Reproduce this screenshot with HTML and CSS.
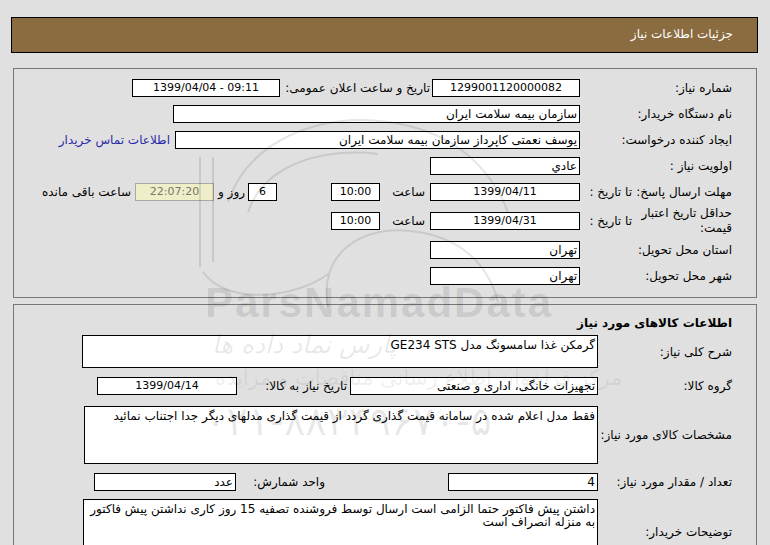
FILE: index.html
```html
<!DOCTYPE html>
<html lang="fa" dir="rtl">
<head>
<meta charset="utf-8">
<title>جزئیات اطلاعات نیاز</title>
<link rel="stylesheet" href="styles.css">
</head>
<body>
<div class="page">
  <div class="header">جزئیات اطلاعات نیاز</div>

  <div class="panel p1">
    <div class="row">
      <div class="lbl">شماره نیاز:</div>
      <div class="box w148 num">1299001120000082</div>
      <div class="lbl-pub">تاریخ و ساعت اعلان عمومی:</div>
      <div class="box w148 num">1399/04/04 - 09:11</div>
    </div>
    <div class="row">
      <div class="lbl">نام دستگاه خریدار:</div>
      <div class="box w407">سازمان بیمه سلامت ایران</div>
    </div>
    <div class="row">
      <div class="lbl">ایجاد کننده درخواست:</div>
      <div class="box w405">یوسف نعمتی کاپرداز سازمان بیمه سلامت ایران</div>
      <a class="contact">اطلاعات تماس خریدار</a>
    </div>
    <div class="row">
      <div class="lbl">اولویت نیاز :</div>
      <div class="box w150">عادي</div>
    </div>
    <div class="row">
      <div class="lbl-a one">مهلت ارسال پاسخ:</div>
      <div class="lbl-b">تا تاریخ :</div>
      <div class="box w150 num">1399/04/11</div>
      <div class="lbl-h">ساعت</div>
      <div class="box w49 num">10:00</div>
      <div class="box w29 num days">6</div>
      <div class="txt-day">روز و</div>
      <div class="box remain num">22:07:20</div>
      <div class="txt-rem">ساعت باقی مانده</div>
    </div>
    <div class="row tall">
      <div class="lbl-a two">حداقل تاریخ اعتبار قیمت:</div>
      <div class="lbl-b">تا تاریخ :</div>
      <div class="box w150 num">1399/04/31</div>
      <div class="lbl-h">ساعت</div>
      <div class="box w49 num">10:00</div>
    </div>
    <div class="row r7">
      <div class="lbl">استان محل تحویل:</div>
      <div class="box w150">تهران</div>
    </div>
    <div class="row">
      <div class="lbl">شهر محل تحویل:</div>
      <div class="box w150">تهران</div>
    </div>
  </div>

  <div class="panel p2">
    <div class="title">اطلاعات کالاهای مورد نیاز</div>
    <div class="row2 g-desc">
      <div class="lbl2">شرح کلی نیاز:</div>
      <div class="box multi w516 h33">گرمکن غذا سامسونگ مدل GE234 STS</div>
    </div>
    <div class="row2 g-group">
      <div class="lbl2">گروه کالا:</div>
      <div class="box w248">تجهیزات خانگی، اداری و صنعتی</div>
      <div class="lbl-need">تاریخ نیاز به کالا:</div>
      <div class="box w140 num">1399/04/14</div>
    </div>
    <div class="row2 g-spec">
      <div class="lbl2">مشخصات کالای مورد نیاز:</div>
      <div class="box multi w514 h58">فقط مدل اعلام شده در سامانه قیمت گذاری گردد از قیمت گذاری مدلهای دیگر جدا اجتناب نمائید</div>
    </div>
    <div class="row2 g-qty">
      <div class="lbl2">تعداد / مقدار مورد نیاز:</div>
      <div class="box w150">4</div>
      <div class="lbl-unit">واحد شمارش:</div>
      <div class="box w142">عدد</div>
    </div>
    <div class="row2 g-note">
      <div class="lbl2">توضیحات خریدار:</div>
      <div class="box multi w515 h66">داشتن پیش فاکتور حتما الزامی است ارسال توسط فروشنده تصفیه 15 روز کاری نداشتن پیش فاکتور به منزله انصراف است</div>
    </div>
  </div>

  <div class="wm" aria-hidden="true">
    <svg class="wm-logo" width="420" height="260" viewBox="0 0 420 260">
      <g fill="none" stroke="rgba(0,0,0,0.10)" stroke-width="2">
        <path d="M12 95 V205"/>
        <path d="M25 95 V200"/>
        <path d="M15 210 C 40 245, 110 235, 140 212"/>
        <path d="M40 140 C 60 80, 130 50, 200 60 C 260 68, 300 100, 320 150"/>
        <path d="M140 245 C 130 195, 170 160, 230 170 C 270 176, 300 200, 310 240"/>
        <path d="M60 150 C 75 105, 130 85, 190 92"/>
      </g>
    </svg>
    <div class="wm-brand">ParsNamadData</div>
    <div class="wm-fa1">پارس نماد داده ها</div>
    <div class="wm-fa2">مرکز فراخوان اطلاع رسانی مناقصات و مزایده</div>
    <div class="wm-phone">۰۲۱-۸۸۳۴۹۶۷۰-۵</div>
  </div>
</div>
</body>
</html>
```

FILE: styles.css
```css
* { box-sizing: border-box; }

body {
  margin: 0;
  background: #e0e0e0;
  font-family: Tahoma, "DejaVu Sans", sans-serif;
  font-size: 12px;
  color: #000;
  direction: rtl;
}

.page {
  position: relative;
  padding: 17px 12px 0 11px;
  height: 545px;
  overflow: hidden;
}

.header {
  height: 36px;
  background: #8b6b40;
  border: 1px solid #000;
  color: #fff;
  line-height: 33px;
  padding-right: 24px;
}

.panel {
  border: 1px solid #777;
  margin: 0 1px 0 2px;
}

.p1 {
  margin-top: 15px;
  padding: 6px 24px 8px 0;
}

.p2 {
  margin-top: 6px;
  padding: 7px 24px 0 0;
  height: 260px;
}

.row {
  display: flex;
  align-items: center;
  height: 26px;
}
.row.tall { height: 32px; }

.lbl { width: 152px; flex: none; }
.lbl-pub { width: 150px; margin-right: 2px; flex: none; }
.lbl-a { width: 100px; flex: none; }
.lbl-a.one { white-space: nowrap; }
.lbl-a.two { line-height: 15px; }
.lbl-b { width: 52px; flex: none; white-space: nowrap; }
.lbl-h { width: 50px; padding-right: 5px; flex: none; }

.box {
  flex: none;
  height: 18px;
  line-height: 16px;
  background: #fff;
  border: 1px solid #000;
  padding: 0 2px;
  white-space: nowrap;
  overflow: hidden;
}
.row .box:first-of-type { margin-right: 5px; }
.num { text-align: center; direction: ltr; font-size: 11px; }

.w148 { width: 148px; }
.w407 { width: 407px; }
.w405 { width: 405px; }
.w150 { width: 150px; }
.w49 { width: 49px; }
.w29 { width: 29px; }
.w516 { width: 516px; }
.w514 { width: 514px; }
.w515 { width: 515px; }
.w248 { width: 248px; }
.w140 { width: 140px; }
.w142 { width: 142px; }

.days { margin-right: 54px; }
.txt-day { margin-right: 3px; }
.remain {
  width: 79px;
  margin-right: 4px;
  background: #eeeec8;
  border-color: #a8a8a0;
  color: #77776a;
}
.txt-rem { margin-right: 4px; }

.contact {
  color: #2b2ba8;
  margin-right: 5px;
  cursor: pointer;
}

.title {
  font-weight: bold;
  height: 22px;
  line-height: 22px;
}

.row2 {
  display: flex;
  align-items: center;
}
.g-desc { margin-top: 1px; }
.g-group { margin-top: 9px; }
.g-spec { margin-top: 11px; }
.g-qty { margin-top: 9px; }
.g-note { margin-top: 8px; }

.lbl2 { width: 134px; flex: none; }
.lbl-need { width: 113px; padding-right: 3px; flex: none; }
.lbl-unit { width: 89px; margin-right: 123px; flex: none; }

.multi {
  white-space: normal;
  line-height: 13px;
  padding-top: 3px;
}
.h33 { height: 33px; }
.h58 { height: 58px; }
.h66 { height: 66px; }

.wm {
  position: absolute;
  left: 0;
  top: 0;
  width: 770px;
  height: 545px;
  pointer-events: none;
}
.wm-logo { position: absolute; left: 188px; top: 62px; }
.wm-brand {
  position: absolute;
  left: 205px;
  top: 279px;
  direction: ltr;
  font-family: "Liberation Sans", Arial, sans-serif;
  font-weight: bold;
  font-size: 42px;
  letter-spacing: 2px;
  color: rgba(0, 0, 0, 0.11);
}
.wm-fa1 {
  position: absolute;
  left: 212px;
  top: 330px;
  font-size: 25px;
  font-style: italic;
  color: rgba(0, 0, 0, 0.09);
}
.wm-fa2 {
  position: absolute;
  left: 215px;
  top: 366px;
  font-size: 21px;
  color: rgba(0, 0, 0, 0.08);
}
.wm-phone {
  position: absolute;
  left: 205px;
  top: 398px;
  direction: ltr;
  font-size: 40px;
  color: rgba(0, 0, 0, 0.09);
}
```
